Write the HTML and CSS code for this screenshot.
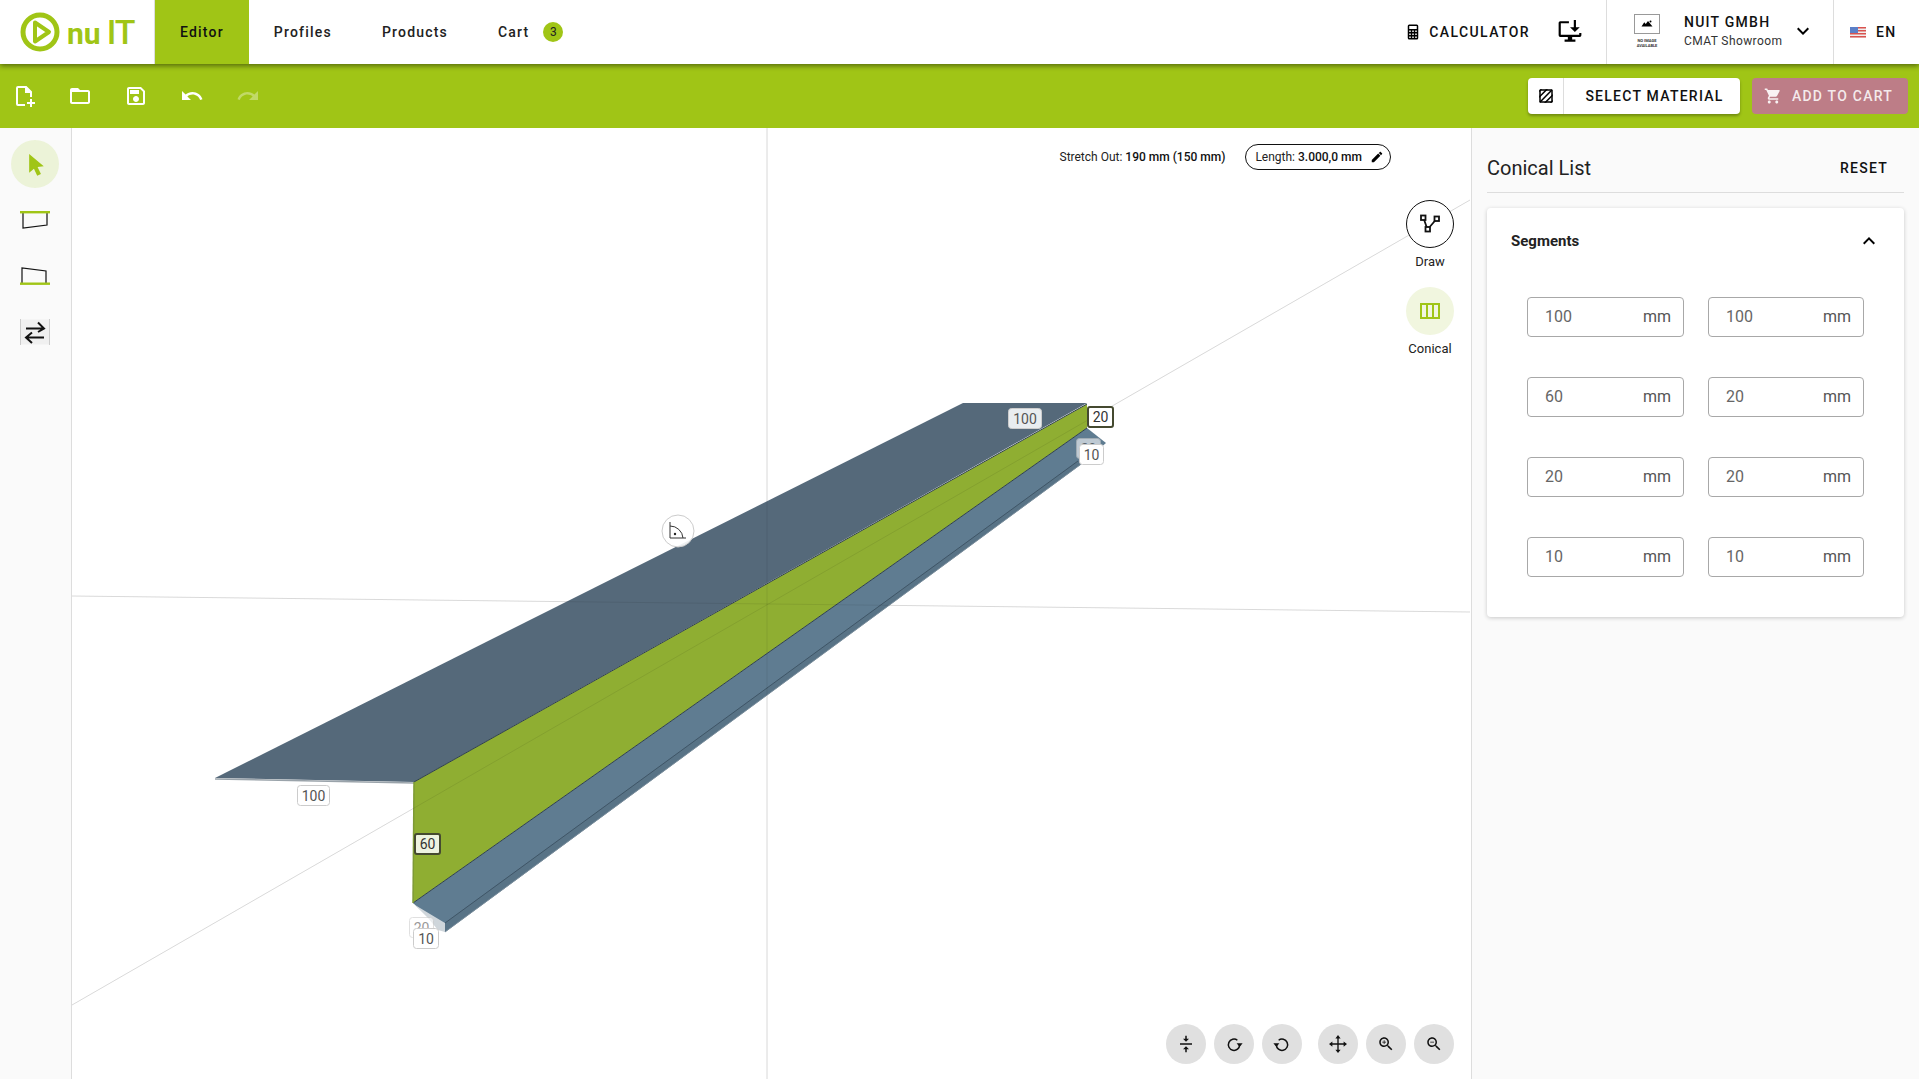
FILE: index.html
```html
<!DOCTYPE html>
<html lang="en">
  <head>
    <meta charset="UTF-8" />
    <title>nuIT Editor</title>
    <link rel="stylesheet" href="styles.css">
  </head>
  <body>
    <header class="top-nav">
      <div class="logo">
        <svg class="logo-mark" viewBox="0 0 40 40" width="40" height="40">
          <circle cx="20" cy="20" r="17" fill="none" stroke="#a0c516" stroke-width="5" />
          <path d="M15 10.5 L29 20 L15 29.5 Z" fill="none" stroke="#a0c516" stroke-width="4" stroke-linejoin="round" />
        </svg>
        <div class="logo-text"><span class="logo-nu">nu</span><span class="logo-it">IT</span></div>
      </div>
      <nav class="tabs">
        <a class="tab active">Editor</a>
        <a class="tab">Profiles</a>
        <a class="tab">Products</a>
        <a class="tab">Cart <span class="badge">3</span></a>
      </nav>
      <div class="nav-right">
        <div class="calc-section">
          <svg class="calc-icon" viewBox="0 0 24 24"><path d="M7,2H17A2,2 0 0,1 19,4V20A2,2 0 0,1 17,22H7A2,2 0 0,1 5,20V4A2,2 0 0,1 7,2M7,4V8H17V4H7M7,10V12H9V10H7M11,10V12H13V10H11M15,10V12H17V10H15M7,14V16H9V14H7M11,14V16H13V14H11M15,14V16H17V14H15M7,18V20H9V18H7M11,18V20H13V18H11M15,18V20H17V18H15Z" /></svg>
          <span class="calc-label">CALCULATOR</span>
          <svg class="monitor-icon" viewBox="0 0 24 24">
            <path d="M11 2H3a1.500 1.500 0 0 0-1.500 1.500V15A1.500 1.500 0 0 0 3 16.500h7V19H7v2h10v-2h-3v-2.500h7a1.500 1.500 0 0 0 1.500-1.500v-2h-2v1.500H3.500V4H11z" />
            <path d="M15.500 1h2v6.500H21L16.500 12 12 7.500h3.500z" />
          </svg>
        </div>
        <div class="user-section">
          <div class="no-image">
            <div class="no-image-box">
              <svg viewBox="0 0 24 24" width="12" height="12"><path d="M14 6l-4.500 6-3-3.500L1 17h22z" /><circle cx="19" cy="7" r="2" /></svg>
            </div>
            <div class="no-image-text">NO IMAGE<br>AVAILABLE</div>
          </div>
          <div class="user-text">
            <div class="company">NUIT GMBH</div>
            <div class="showroom">CMAT Showroom</div>
          </div>
          <svg class="user-chevron" viewBox="0 0 24 24"><path d="M7.410 8.590L12 13.170l4.590-4.580L18 10l-6 6-6-6z" /></svg>
        </div>
        <div class="lang-section">
          <svg class="flag" viewBox="0 0 16 11" width="16" height="11">
            <rect width="16" height="11" fill="#eee" />
            <path d="M0 0h16v1.500H0zM0 3h16v1.500H0zM0 6h16v1.500H0zM0 9h16v1.500H0z" fill="#d9534f" />
            <rect width="8" height="6" fill="#5b7fc7" />
          </svg>
          <span class="lang">EN</span>
        </div>
      </div>
    </header>

    <div class="toolbar">
      <div class="tool-icons">
        <button class="tool-btn">
          <svg viewBox="0 0 24 24"><path d="M6 2h8.500L20 7.500V13h-2V9h-5V4H6v16h7v2H6a2 2 0 0 1-2-2V4a2 2 0 0 1 2-2z" /><path d="M18 15h2v3h3v2h-3v3h-2v-3h-3v-2h3z" /></svg>
        </button>
        <button class="tool-btn">
          <svg viewBox="0 0 24 24"><path d="M20 6h-8l-2-2H4c-1.100 0-1.990.9-1.990 2L2 18c0 1.100.9 2 2 2h16c1.100 0 2-.9 2-2V8c0-1.100-.9-2-2-2zm0 12H4V8h16v10z" /></svg>
        </button>
        <button class="tool-btn">
          <svg viewBox="0 0 24 24"><path d="M17 3H5c-1.110 0-2 .9-2 2v14c0 1.100.89 2 2 2h14c1.100 0 2-.9 2-2V7l-4-4zm2 16H5V5h11.170L19 7.830V19zm-7-7c-1.660 0-3 1.340-3 3s1.340 3 3 3 3-1.340 3-3-1.340-3-3-3zM6 6h9v4H6z" /></svg>
        </button>
        <button class="tool-btn">
          <svg viewBox="0 0 24 24"><path d="M12.500 8c-2.650 0-5.050.99-6.900 2.600L2 7v9h9l-3.620-3.620c1.390-1.160 3.160-1.880 5.120-1.880 3.540 0 6.550 2.310 7.600 5.500l2.370-.78C21.080 11.030 17.150 8 12.500 8z" /></svg>
        </button>
        <button class="tool-btn disabled">
          <svg viewBox="0 0 24 24"><path d="M18.400 10.600C16.550 8.990 14.150 8 11.500 8c-4.650 0-8.580 3.030-9.960 7.220L3.900 16c1.050-3.190 4.050-5.500 7.600-5.500 1.950 0 3.730.72 5.120 1.880L13 16h9V7l-3.600 3.600z" /></svg>
        </button>
      </div>
      <div class="toolbar-actions">
        <button class="material-btn">
          <span class="material-swatch">
            <svg viewBox="0 0 24 24" width="18" height="18"><path d="M19.510 3.080L3.080 19.510c.09.34.27.65.51.900.25.24.56.42.9.51L20.930 4.490c-.19-.69-.73-1.230-1.420-1.410zM11.880 3L3 11.880v2.830L14.710 3h-2.830zM5 3c-1.100 0-2 .9-2 2v2l4-4H5zm14 18c.55 0 1.050-.22 1.410-.59.37-.36.59-.86.59-1.410v-2l-4 4h2zm-9.710 0h2.830L21 12.120V9.290L9.290 21z" /><path d="M5 3h14a2 2 0 0 1 2 2v14a2 2 0 0 1-2 2H5a2 2 0 0 1-2-2V5a2 2 0 0 1 2-2zm0 2v14h14V5z" /></svg>
          </span>
          <span class="material-label">SELECT MATERIAL</span>
        </button>
        <button class="cart-btn">
          <svg viewBox="0 0 24 24" width="18" height="18"><path d="M7 18c-1.100 0-1.990.9-1.990 2S5.900 22 7 22s2-.9 2-2-.9-2-2-2zM1 2v2h2l3.600 7.590-1.350 2.450c-.16.28-.25.61-.25.96 0 1.100.9 2 2 2h12v-2H7.420c-.14 0-.25-.11-.25-.25l.03-.12.9-1.630h7.450c.75 0 1.410-.41 1.750-1.030l3.580-6.490c.08-.14.12-.31.12-.48 0-.55-.45-1-1-1H5.210l-.94-2H1zm16 16c-1.100 0-1.990.9-1.990 2s.89 2 1.990 2 2-.9 2-2-.9-2-2-2z" /></svg>
          ADD TO CART
        </button>
      </div>
    </div>

    <div class="workspace">
      <aside class="side-tools">
        <div class="side-btn selected">
          <svg viewBox="0 0 24 24" width="28" height="28"><path d="M7 3.500L19.500 14l-5.300.6 2.900 5.900-3.200 1.500-2.800-6L7 19.500z" fill="#a0c516" /></svg>
        </div>
        <div class="side-btn">
          <svg viewBox="0 0 32 24" width="32" height="24"><path d="M4 5V20L28 17V5" fill="none" stroke="#111" stroke-width="1.200" /><rect x="1" y="3" width="30" height="2.400" fill="#a0c516" /></svg>
        </div>
        <div class="side-btn">
          <svg viewBox="0 0 32 24" width="32" height="24"><path d="M3 19V4L27 7V19" fill="none" stroke="#111" stroke-width="1.200" /><rect x="1" y="18.500" width="30" height="2.400" fill="#a0c516" /></svg>
        </div>
        <div class="side-btn">
          <svg class="swap-icon" viewBox="0 0 30 26" width="30" height="26">
            <rect x="0.500" y="0.500" width="29" height="25" fill="#f0f0f0" stroke="none" />
            <path d="M0.500 0V26M29.500 0V26" stroke="#ccc" stroke-width="1" />
            <path d="M6 9.500H24M18 3.500L24 9.500 18 13" fill="none" stroke="#111" stroke-width="2" />
            <path d="M24 18.500H6M12 13.500L6 18.500 12 24" fill="none" stroke="#111" stroke-width="2" />
          </svg>
        </div>
      </aside>

      <main class="canvas">
        <!-- viewBox uses page coordinates so the drawing stays easy to read -->
        <svg class="scene" viewBox="72 128 1399 951" width="1399" height="951">
          <line x1="72" y1="1005" x2="1470" y2="200" class="grid-line" />
          <line x1="72" y1="596" x2="1470" y2="612" class="grid-line" />
          <line x1="767" y1="128" x2="767" y2="1079" class="grid-line" />

          <polygon points="215,778 963,403 1087,403 414,782" fill="#55697a" />
          <polygon points="414,782 1087,404 1087,428 413,903" fill="#8fae32" />
          <polygon points="413,903 1087,428 1106,443 1084,462 445,932" fill="#5f7c91" />
          <polygon points="445,923 1078,461 1084,462 445,932" fill="#587386" />
          <line x1="445" y1="923" x2="1078" y2="461" stroke="#3f5566" stroke-width="1" />
          <line x1="445" y1="932" x2="1084" y2="462" stroke="#7c8f9d" stroke-width="1" />
          <polygon points="415,905 445,923 445,932 438,930 428,918" fill="#cfd6db" />
          <polyline points="215,779 414,783" fill="none" stroke="#9aa3aa" stroke-width="1.500" />
          <line x1="414" y1="782" x2="1087" y2="404" stroke="#2e3f4d" stroke-width="1" />
          <line x1="413" y1="903" x2="1087" y2="428" stroke="#2e3f4d" stroke-width="1" />
          <line x1="414" y1="782" x2="413" y2="903" stroke="#7e9a36" stroke-width="1.500" />

          <line x1="72" y1="1005" x2="1470" y2="200" class="grid-over" />
          <line x1="72" y1="596" x2="1470" y2="612" class="grid-over" />
          <line x1="767" y1="128" x2="767" y2="1079" class="grid-over" />

          <g class="dim">
            <rect x="297.500" y="785.500" width="32" height="20" rx="3" />
            <text x="313.500" y="800.500">100</text>
          </g>
          <g class="dim faded">
            <rect x="409.500" y="917.500" width="24" height="20" rx="3" />
            <text x="421.500" y="932.500">20</text>
          </g>
          <g class="dim">
            <rect x="413.500" y="928.500" width="25" height="20" rx="3" />
            <text x="426" y="943.500">10</text>
          </g>
          <g class="dim active">
            <rect x="415" y="834" width="25" height="20" rx="2" />
            <text x="427.500" y="849">60</text>
          </g>
          <g class="dim top">
            <rect x="1008.500" y="408.500" width="33" height="20" rx="3" />
            <text x="1025" y="423.500">100</text>
          </g>
          <g class="dim faded">
            <rect x="1076.500" y="438.500" width="24" height="20" rx="3" />
            <text x="1088.500" y="453.500">20</text>
          </g>
          <g class="dim">
            <rect x="1079.500" y="444.500" width="24" height="20" rx="3" />
            <text x="1091.500" y="459.500">10</text>
          </g>
          <g class="dim plain-active">
            <rect x="1088" y="407" width="25" height="20" rx="2" />
            <text x="1100.500" y="422">20</text>
          </g>

          <circle cx="678" cy="531" r="16" fill="#fff" fill-opacity="0.9" stroke="#ccc" stroke-width="1" />
          <path d="M670 522V538H686M670 526a13 13 0 0 1 13 12" fill="none" stroke="#333" stroke-width="1" />
          <circle cx="675" cy="534" r="1.200" fill="#222" />
        </svg>

        <div class="info-bar">
          <span class="stretch">Stretch Out: <b>190 mm (150 mm)</b></span>
          <span class="length-pill">
            <span>Length: <b>3.000,0 mm</b></span>
            <svg viewBox="0 0 24 24" width="14" height="14"><path d="M3 17.250V21h3.750L17.810 9.940l-3.750-3.750L3 17.250zM20.710 7.040c.39-.39.39-1.020 0-1.410l-2.340-2.340c-.39-.39-1.020-.39-1.410 0l-1.830 1.830 3.750 3.750 1.830-1.830z" /></svg>
          </span>
        </div>

        <div class="mode-list">
          <div class="mode">
            <div class="mode-circle outlined">
              <svg viewBox="0 0 24 24" width="24" height="24">
                <path d="M5.500 6L9.500 17.500M9.500 17.500L18.500 7" fill="none" stroke="#111" stroke-width="1.800" />
                <rect x="3" y="3.500" width="4.500" height="4.500" fill="#fff" stroke="#111" stroke-width="1.800" />
                <rect x="16.500" y="4.500" width="4.500" height="4.500" fill="#fff" stroke="#111" stroke-width="1.800" />
                <rect x="7.500" y="15" width="4.500" height="4.500" fill="#fff" stroke="#111" stroke-width="1.800" />
              </svg>
            </div>
            <span>Draw</span>
          </div>
          <div class="mode">
            <div class="mode-circle selected">
              <svg viewBox="0 0 24 24" width="24" height="24"><path d="M2 4h20v16H2zM4 6v12h4V6zm6 0v12h4V6zm6 0v12h4V6z" fill="#a0c516" /></svg>
            </div>
            <span>Conical</span>
          </div>
        </div>

        <div class="view-controls">
          <div class="view-group">
            <button class="view-btn"><svg viewBox="0 0 24 24"><path d="M8 19h3v4h2v-4h3l-4-4-4 4zm8-14h-3V1h-2v4H8l4 4 4-4zM4 11v2h16v-2H4z" /></svg></button>
            <button class="view-btn"><svg viewBox="0 0 24 24"><path d="M19.500 13a7.500 7.500 0 1 1-3-6" fill="none" stroke="#111" stroke-width="2" /><path d="M15.500 11h8l-4 5z" /></svg></button>
            <button class="view-btn"><svg viewBox="0 0 24 24"><path d="M4.500 13a7.500 7.500 0 1 0 3-6" fill="none" stroke="#111" stroke-width="2" /><path d="M.5 11h8l-4 5z" /></svg></button>
          </div>
          <div class="view-group">
            <button class="view-btn"><svg viewBox="0 0 24 24"><path d="M12 3V21M3 12H21" fill="none" stroke="#111" stroke-width="1.800" /><path d="M12 0l3.500 4.500h-7zM12 24l3.500-4.500h-7zM0 12l4.500-3.500v7zM24 12l-4.500-3.500v7z" /></svg></button>
            <button class="view-btn"><svg viewBox="0 0 24 24"><path d="M15.500 14h-.79l-.28-.27C15.410 12.590 16 11.110 16 9.500 16 5.910 13.090 3 9.500 3S3 5.910 3 9.500 5.910 16 9.500 16c1.610 0 3.090-.59 4.230-1.570l.27.28v.79l5 4.990L20.490 19l-4.990-5zm-6 0C7.010 14 5 11.990 5 9.500S7.010 5 9.500 5 14 7.010 14 9.500 11.990 14 9.500 14zm.5-7H9v2H7v1h2v2h1v-2h2V9h-2z" /></svg></button>
            <button class="view-btn"><svg viewBox="0 0 24 24"><path d="M15.500 14h-.79l-.28-.27C15.410 12.590 16 11.110 16 9.500 16 5.910 13.090 3 9.500 3S3 5.910 3 9.500 5.910 16 9.500 16c1.610 0 3.090-.59 4.230-1.570l.27.28v.79l5 4.990L20.490 19l-4.990-5zm-6 0C7.010 14 5 11.990 5 9.500S7.010 5 9.500 5 14 7.010 14 9.500 11.990 14 9.500 14zM7 9h5v1H7z" /></svg></button>
          </div>
        </div>
      </main>

      <aside class="panel">
        <div class="panel-head">
          <span class="panel-title">Conical List</span>
          <span class="reset">RESET</span>
        </div>
        <section class="card">
          <div class="card-head">
            <span class="card-title">Segments</span>
            <svg viewBox="0 0 24 24" width="24" height="24"><path d="M7.410 15.410L12 10.830l4.590 4.580L18 14l-6-6-6 6z" /></svg>
          </div>
          <div class="field-grid">
            <div class="field"><span>100</span><span class="unit">mm</span></div>
            <div class="field"><span>100</span><span class="unit">mm</span></div>
            <div class="field"><span>60</span><span class="unit">mm</span></div>
            <div class="field"><span>20</span><span class="unit">mm</span></div>
            <div class="field"><span>20</span><span class="unit">mm</span></div>
            <div class="field"><span>20</span><span class="unit">mm</span></div>
            <div class="field"><span>10</span><span class="unit">mm</span></div>
            <div class="field"><span>10</span><span class="unit">mm</span></div>
          </div>
        </section>
      </aside>
    </div>
  </body>
</html>
```

FILE: styles.css
```css
* {
  box-sizing: border-box;
}

html,
body {
  height: 100%;
}

body {
  margin: 0;
  font-family: Roboto, "Liberation Sans", sans-serif;
  color: #111;
  background-color: #fff;
  overflow: hidden;
  display: flex;
  flex-direction: column;
}

button {
  font-family: inherit;
  border: none;
  cursor: pointer;
  padding: 0;
}

/* Top navigation */
.top-nav {
  height: 64px;
  display: flex;
  align-items: stretch;
  background-color: #fff;
  position: relative;
  z-index: 2;
  box-shadow: 0 2px 5px rgba(0, 0, 0, 0.45);
  flex-shrink: 0;
}

.logo {
  width: 155px;
  display: flex;
  align-items: center;
  padding-left: 20px;
  color: #a0c516;
  border-right: 1px solid #ddd;
}

.logo-mark {
  flex-shrink: 0;
}

.logo-text {
  line-height: 1;
  white-space: nowrap;
}

.logo-nu {
  margin-left: 7px;
  font-size: 30px;
  font-weight: 700;
}

.logo-it {
  margin-left: 6px;
  font-size: 34px;
  font-weight: 500;
  letter-spacing: -1px;
}

.tabs {
  display: flex;
}

.tab {
  display: flex;
  align-items: center;
  padding: 0 25px;
  font-size: 14px;
  font-weight: 500;
  letter-spacing: 1.2px;
  color: #222;
}

.tab.active {
  background-color: #a0c516;
  color: #111;
}

.badge {
  width: 20px;
  height: 20px;
  margin-left: 14px;
  border-radius: 50%;
  background-color: #a0c516;
  font-size: 12px;
  font-weight: 400;
  letter-spacing: 0;
  display: flex;
  align-items: center;
  justify-content: center;
}

.nav-right {
  margin-left: auto;
  display: flex;
}

.calc-section {
  display: flex;
  align-items: center;
  padding-right: 23px;
}

.calc-icon {
  width: 18px;
  height: 18px;
  margin-right: 7px;
}

.calc-label {
  font-size: 14px;
  font-weight: 500;
  letter-spacing: 1.4px;
  margin-right: 27px;
}

.monitor-icon {
  width: 26px;
  height: 26px;
}

.user-section {
  width: 227px;
  display: flex;
  align-items: center;
  padding-left: 27px;
  padding-bottom: 3px;
  border-left: 1px solid #ddd;
}

.no-image {
  width: 26px;
  margin-right: 24px;
  text-align: center;
}

.no-image-box {
  height: 20px;
  border: 1px solid #999;
  display: flex;
  align-items: center;
  justify-content: center;
}

.no-image-text {
  margin-top: 4px;
  font-size: 4px;
  line-height: 5px;
  font-weight: 700;
  white-space: nowrap;
  color: #333;
}

.user-text {
  width: 100px;
}

.company {
  font-size: 14px;
  font-weight: 500;
  letter-spacing: 1.25px;
  line-height: 18px;
  white-space: nowrap;
}

.showroom {
  margin-top: 2px;
  font-size: 12px;
  letter-spacing: 0.4px;
  color: #333;
  line-height: 16px;
  white-space: nowrap;
}

.user-chevron {
  width: 24px;
  height: 24px;
  margin-left: 7px;
}

.lang-section {
  width: 86px;
  display: flex;
  align-items: center;
  padding-left: 16px;
  border-left: 1px solid #ddd;
}

.lang {
  margin-left: 10px;
  font-size: 14px;
  font-weight: 500;
  letter-spacing: 1.25px;
}

/* Green toolbar */
.toolbar {
  height: 64px;
  display: flex;
  align-items: center;
  justify-content: space-between;
  background-color: #a0c516;
  flex-shrink: 0;
}

.tool-icons {
  display: flex;
  margin-left: -4px;
}

.tool-btn {
  width: 56px;
  height: 64px;
  background: none;
  display: flex;
  align-items: center;
  justify-content: center;
}

.tool-btn svg {
  width: 24px;
  height: 24px;
  fill: #fff;
}

.tool-btn.disabled svg {
  fill: rgba(255, 255, 255, 0.35);
}

.toolbar-actions {
  display: flex;
  gap: 12px;
  margin-right: 11px;
}

.material-btn {
  width: 212px;
  height: 36px;
  display: flex;
  align-items: stretch;
  background-color: #fff;
  border-radius: 4px;
  box-shadow: 0 2px 3px rgba(0, 0, 0, 0.3);
}

.material-swatch {
  width: 36px;
  display: flex;
  align-items: center;
  justify-content: center;
  border-right: 1px solid #ddd;
}

.material-label {
  flex: 1;
  align-self: center;
  padding-left: 5px;
  text-align: center;
  font-size: 14px;
  font-weight: 500;
  letter-spacing: 1.25px;
  color: #111;
}

.cart-btn {
  width: 156px;
  height: 36px;
  padding-right: 3px;
  display: flex;
  align-items: center;
  justify-content: center;
  gap: 10px;
  background-color: #bd7d87;
  color: rgba(255, 255, 255, 0.85);
  border-radius: 4px;
  font-size: 14px;
  font-weight: 500;
  letter-spacing: 1.25px;
}

.cart-btn svg {
  fill: rgba(255, 255, 255, 0.9);
}

/* Main area */
.workspace {
  flex: 1;
  min-height: 0;
  display: flex;
}

.side-tools {
  width: 72px;
  flex-shrink: 0;
  background-color: #fafafa;
  border-right: 1px solid #ddd;
  padding: 12px 0 0 11px;
  display: flex;
  flex-direction: column;
  gap: 8px;
}

.side-btn {
  width: 48px;
  height: 48px;
  border-radius: 50%;
  display: flex;
  align-items: center;
  justify-content: center;
}

.side-btn.selected {
  background-color: #ecf3d8;
}

.canvas {
  flex: 1;
  min-width: 0;
  position: relative;
  overflow: hidden;
  background-color: #fff;
}

.scene {
  position: absolute;
  top: 0;
  left: 0;
}

.grid-line {
  stroke: #ececec;
  stroke-width: 1;
}

.grid-over {
  stroke: #000;
  stroke-opacity: 0.08;
  stroke-width: 1;
}

.dim rect {
  fill: #fff;
  stroke: #ccc;
  stroke-width: 1;
}

.dim text {
  font-family: Roboto, sans-serif;
  font-size: 14px;
  fill: #555;
  text-anchor: middle;
}

.dim.faded {
  opacity: 0.6;
}

.dim.top rect {
  fill: #e9edf0;
}

.dim.active rect {
  fill: #eef3e0;
  stroke: #454a30;
  stroke-width: 2;
}

.dim.plain-active rect {
  fill: #fff;
  stroke: #454a30;
  stroke-width: 2;
}

.dim.active text,
.dim.plain-active text {
  fill: #333;
}

.info-bar {
  position: absolute;
  top: 16px;
  right: 80px;
  display: flex;
  align-items: center;
  gap: 20px;
  font-size: 12px;
  color: #222;
}

.stretch b,
.length-pill b {
  font-weight: 500;
  color: #111;
}

.length-pill {
  height: 26px;
  padding: 0 6px 0 9px;
  display: flex;
  align-items: center;
  gap: 8px;
  border: 1px solid #111;
  border-radius: 13px;
}

.mode-list {
  position: absolute;
  top: 72px;
  right: 9px;
  display: flex;
  flex-direction: column;
  align-items: center;
  gap: 17px;
}

.mode {
  width: 64px;
  display: flex;
  flex-direction: column;
  align-items: center;
  gap: 5px;
  font-size: 13px;
  color: #222;
  line-height: 17px;
}

.mode-circle {
  width: 48px;
  height: 48px;
  border-radius: 50%;
  display: flex;
  align-items: center;
  justify-content: center;
}

.mode-circle.outlined {
  background-color: #fff;
  border: 1px solid #111;
}

.mode-circle.selected {
  background-color: #f1f6df;
}

.view-controls {
  position: absolute;
  right: 17px;
  bottom: 15px;
  display: flex;
  gap: 16px;
}

.view-group {
  display: flex;
  gap: 8px;
}

.view-btn {
  width: 40px;
  height: 40px;
  border-radius: 50%;
  background-color: #e0e0e0;
  display: flex;
  align-items: center;
  justify-content: center;
}

.view-btn svg {
  width: 18px;
  height: 18px;
  fill: #111;
}

/* Right panel */
.panel {
  width: 448px;
  flex-shrink: 0;
  background-color: #fafafa;
  border-left: 1px solid #ddd;
  padding: 0 15px;
}

.panel-head {
  height: 65px;
  padding: 16px 16px 0 0;
  display: flex;
  align-items: center;
  justify-content: space-between;
  border-bottom: 1px solid #ddd;
}

.panel-title {
  font-size: 20px;
  color: #222;
}

.reset {
  font-size: 14px;
  font-weight: 500;
  letter-spacing: 1.25px;
}

.card {
  margin-top: 15px;
  background-color: #fff;
  border-radius: 4px;
  box-shadow: 0 1px 4px rgba(0, 0, 0, 0.2);
  padding-bottom: 40px;
}

.card-head {
  height: 66px;
  padding: 0 23px 0 24px;
  display: flex;
  align-items: center;
  justify-content: space-between;
}

.card-title {
  font-size: 15px;
  font-weight: 700;
  color: #222;
}

.field-grid {
  margin-top: 23px;
  padding: 0 40px;
  display: grid;
  grid-template-columns: 157px 156px;
  gap: 40px 24px;
}

.field {
  height: 40px;
  padding: 0 12px 2px 17px;
  display: flex;
  align-items: center;
  justify-content: space-between;
  border: 1px solid #a8a8a8;
  border-radius: 4px;
  font-size: 16px;
  color: #666;
}

.field .unit {
  color: #555;
}
```
